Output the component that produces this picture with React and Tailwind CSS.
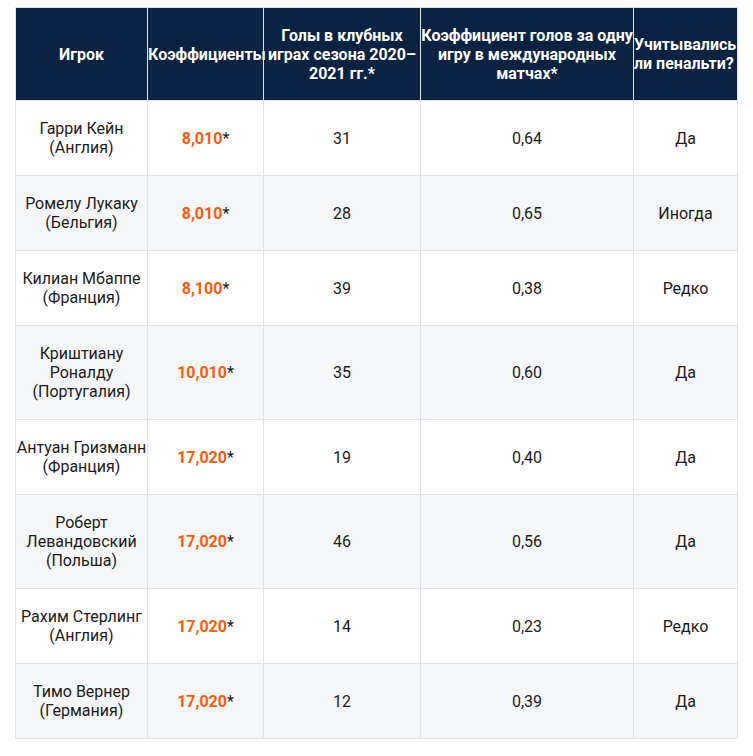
const rows = [
  { name: ['Гарри Кейн', '(Англия)'], odds: '8,010', goals: '31', ratio: '0,64', pen: 'Да' },
  { name: ['Ромелу Лукаку', '(Бельгия)'], odds: '8,010', goals: '28', ratio: '0,65', pen: 'Иногда' },
  { name: ['Килиан Мбаппе', '(Франция)'], odds: '8,100', goals: '39', ratio: '0,38', pen: 'Редко' },
  { name: ['Криштиану', 'Роналду', '(Португалия)'], odds: '10,010', goals: '35', ratio: '0,60', pen: 'Да' },
  { name: ['Антуан Гризманн', '(Франция)'], odds: '17,020', goals: '19', ratio: '0,40', pen: 'Да' },
  { name: ['Роберт', 'Левандовский', '(Польша)'], odds: '17,020', goals: '46', ratio: '0,56', pen: 'Да' },
  { name: ['Рахим Стерлинг', '(Англия)'], odds: '17,020', goals: '14', ratio: '0,23', pen: 'Редко' },
  { name: ['Тимо Вернер', '(Германия)'], odds: '17,020', goals: '12', ratio: '0,39', pen: 'Да' },
];

export default function App() {
  return (
    <div className="bg-white pt-[7px] pl-[15px] pb-[18px] font-['Roboto',sans-serif] text-[16px] leading-[19px] text-[#1b1b1b]">
      <table className="w-[722px] table-fixed border-collapse text-center">
        <colgroup>
          <col className="w-[132px]" />
          <col className="w-[116px]" />
          <col className="w-[157px]" />
          <col className="w-[213px]" />
          <col className="w-[104px]" />
        </colgroup>
        <thead>
          <tr className="h-[93px] bg-[#0b2343] font-bold text-white">
            <th className="border border-[#e1e3e8] px-0">Игрок</th>
            <th className="border border-[#e1e3e8] px-0">Коэффициенты</th>
            <th className="border border-[#e1e3e8] px-[2px]">Голы в клубных играх сезона 2020–2021 гг.*</th>
            <th className="border border-[#e1e3e8] px-0">
              Коэффициент голов за одну игру в международных матчах*
            </th>
            <th className="border border-[#e1e3e8] px-0 text-left">Учитывались ли пенальти?</th>
          </tr>
        </thead>
        <tbody>
          {rows.map((r, i) => (
            <tr
              key={i}
              className={`${i % 2 ? 'bg-[#f5f6f8]' : 'bg-white'} ${r.name.length > 2 ? 'h-[94px]' : 'h-[75px]'}`}
            >
              <td className="border border-[#e1e3e8] px-0">
                {r.name.map((l, j) => (
                  <div key={j}>{l}</div>
                ))}
              </td>
              <td className="border border-[#e1e3e8] px-0">
                <span className="font-bold text-[#ff5a0a]">{r.odds}</span>*
              </td>
              <td className="border border-[#e1e3e8] px-0">{r.goals}</td>
              <td className="border border-[#e1e3e8] px-0">{r.ratio}</td>
              <td className="border border-[#e1e3e8] px-0">{r.pen}</td>
            </tr>
          ))}
        </tbody>
      </table>
    </div>
  );
}
